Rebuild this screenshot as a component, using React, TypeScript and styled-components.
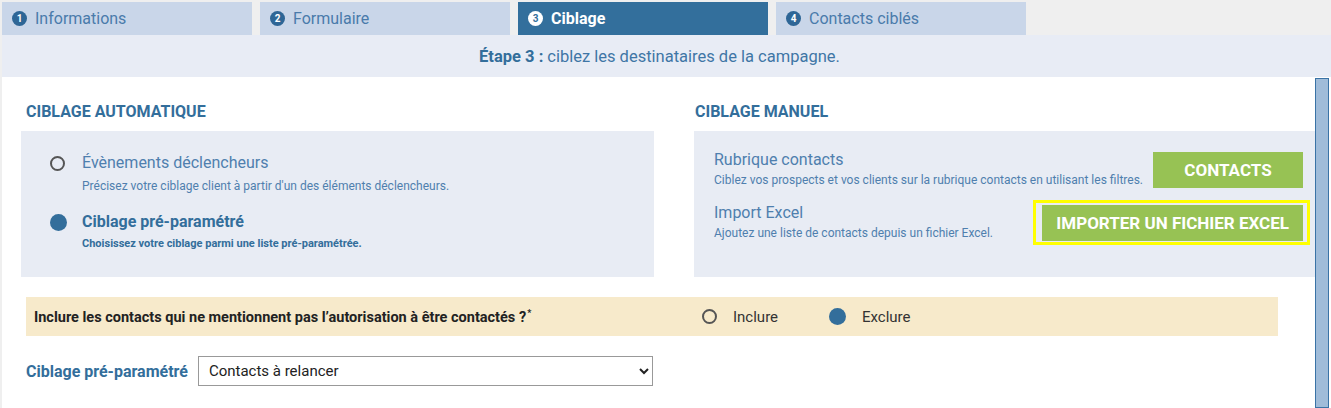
import React from 'react';
import styled, { createGlobalStyle } from 'styled-components';

const GlobalStyle = createGlobalStyle`
  html, body {
    margin: 0;
    padding: 0;
    background: #efefef;
    overflow: hidden;
  }
  body {
    font-family: Roboto, 'Liberation Sans', Arial, sans-serif;
  }
`;

const Page = styled.div`
  padding: 2px 0 0 2px;
  height: 100vh;
  box-sizing: border-box;
  display: flex;
  flex-direction: column;
`;

const Tabs = styled.nav`
  display: flex;
  gap: 8px;
`;

const Tab = styled.div<{ $active?: boolean }>`
  width: 250px;
  height: 33px;
  box-sizing: border-box;
  padding-left: 10px;
  display: flex;
  align-items: center;
  gap: 8px;
  font-size: 16px;
  background: ${(p) => (p.$active ? '#336f9c' : '#c9d6e9')};
  color: ${(p) => (p.$active ? '#ffffff' : '#4a7bab')};
  font-weight: ${(p) => (p.$active ? 700 : 400)};
`;

const StepNumber = styled.span<{ $active?: boolean }>`
  width: 15px;
  height: 15px;
  border-radius: 50%;
  display: inline-flex;
  align-items: center;
  justify-content: center;
  font-size: 10px;
  font-weight: 700;
  background: ${(p) => (p.$active ? '#ffffff' : '#2e6696')};
  color: ${(p) => (p.$active ? '#336f9c' : '#ffffff')};
`;

const StepBar = styled.div`
  height: 42px;
  padding-right: 14px;
  background: #e8ecf5;
  display: flex;
  align-items: center;
  justify-content: center;
  font-size: 16.5px;
  color: #3f76a6;

  strong {
    color: #336e9b;
    margin-right: 4px;
  }
`;

const Main = styled.main`
  flex: 1;
  background: #ffffff;
  display: flex;
`;

const Content = styled.div`
  flex: 1;
  padding: 26px 0 0 19px;
`;

const Columns = styled.div`
  display: grid;
  grid-template-columns: 633px 1fr;
  column-gap: 40px;
`;

const Column = styled.section`
  display: flex;
  flex-direction: column;
`;

const Heading = styled.h2<{ $indent?: number }>`
  margin: 0 0 10px ${(p) => p.$indent ?? 0}px;
  font-size: 16px;
  line-height: 18px;
  font-weight: 700;
  text-transform: uppercase;
  color: #336e9b;
`;

const Panel = styled.div`
  flex: 1;
  background: #e8ecf4;
`;

const AutoPanel = styled(Panel)`
  padding: 22px 0 25px 29px;
`;

const ManualPanel = styled(Panel)`
  padding: 19px 12px 0 20px;
  display: flex;
  flex-direction: column;
  gap: 15px;
`;

const Option = styled.div`
  display: flex;
  gap: 14px;
  & + & {
    margin-top: 18px;
  }
`;

const RadioSlot = styled.div`
  width: 18px;
  height: 20px;
  display: flex;
  align-items: center;
  justify-content: flex-start;
`;

const Radio = styled.span<{ $checked?: boolean }>`
  display: inline-block;
  flex-shrink: 0;
  box-sizing: border-box;
  border-radius: 50%;
  width: ${(p) => (p.$checked ? 17 : 15)}px;
  height: ${(p) => (p.$checked ? 17 : 15)}px;
  border: ${(p) => (p.$checked ? 'none' : '2px solid #555555')};
  background: ${(p) => (p.$checked ? '#336e9b' : 'transparent')};
`;

const OptionTitle = styled.div<{ $strong?: boolean }>`
  font-size: 16px;
  line-height: 20px;
  font-weight: ${(p) => (p.$strong ? 700 : 400)};
  color: ${(p) => (p.$strong ? '#336e9b' : '#4f7fae')};
`;

const OptionHint = styled.div<{ $strong?: boolean }>`
  font-size: ${(p) => (p.$strong ? 11 : 12)}px;
  line-height: 16px;
  margin-top: ${(p) => (p.$strong ? 4 : 5)}px;
  font-weight: ${(p) => (p.$strong ? 700 : 400)};
  color: ${(p) => (p.$strong ? '#336e9b' : '#4f7fae')};
`;

const ManualRow = styled.div`
  display: flex;
  justify-content: space-between;
  align-items: flex-end;
`;

const ManualTitle = styled.div`
  font-size: 16px;
  line-height: 20px;
  color: #4f7fae;
`;

const ManualHint = styled.div`
  font-size: 12px;
  line-height: 16px;
  margin-top: 2px;
  color: #4f7fae;
`;

const GreenButton = styled.button<{ $width?: number }>`
  height: 36px;
  ${(p) => (p.$width ? `width: ${p.$width}px;` : 'padding: 0 14px;')}
  border: none;
  background: #97c254;
  color: #ffffff;
  font-family: Roboto, 'Liberation Sans', Arial, sans-serif;
  font-size: 17px;
  font-weight: 700;
  text-transform: uppercase;
  cursor: pointer;
`;

const FocusRing = styled.div`
  border: 3px solid #ffff00;
  padding: 2px 4px 1px 6px;
  margin: -5px -7px -4px -9px;
  display: flex;
`;

const ConsentRow = styled.div`
  margin: 20px 37px 0 5px;
  height: 39px;
  background: #f7eacb;
  display: flex;
  align-items: center;
`;

const ConsentLabel = styled.div`
  width: 676px;
  box-sizing: border-box;
  padding-left: 8px;
  font-size: 14.5px;
  font-weight: 700;
  color: #222222;

  sup {
    font-size: 9px;
    margin-left: 1px;
  }
`;

const ChoiceGroup = styled.div`
  display: flex;
  align-items: center;
  gap: 51px;
`;

const Choice = styled.label`
  display: flex;
  align-items: center;
  gap: 16px;
  font-size: 15px;
  color: #333333;
`;

const SelectRow = styled.div`
  margin: 20px 0 0 5px;
  display: flex;
  align-items: center;
  gap: 10px;
`;

const SelectLabel = styled.label`
  font-size: 16px;
  font-weight: 700;
  color: #336e9b;
`;

const Select = styled.select`
  width: 455px;
  height: 30px;
  padding: 0 6px;
  border: 1px solid #999999;
  border-radius: 0;
  background: #ffffff;
  font-family: Roboto, 'Liberation Sans', Arial, sans-serif;
  font-size: 15px;
  color: #222222;
`;

const ScrollTrack = styled.div`
  width: 16px;
  padding-top: 1px;
`;

const ScrollThumb = styled.div`
  width: 14px;
  height: 100%;
  box-sizing: border-box;
  background: #a0bcd9;
  border: 1px solid #3a73a6;
`;

const steps = ['Informations', 'Formulaire', 'Ciblage', 'Contacts ciblés'];

const App: React.FC = () => {
  return (
    <>
      <GlobalStyle />
      <Page>
        <Tabs>
          {steps.map((label, i) => (
            <Tab key={label} $active={i === 2}>
              <StepNumber $active={i === 2}>{i + 1}</StepNumber>
              {label}
            </Tab>
          ))}
        </Tabs>
        <StepBar>
          <strong>Étape 3 :</strong> ciblez les destinataires de la campagne.
        </StepBar>
        <Main>
          <Content>
            <Columns>
              <Column>
                <Heading $indent={5}>Ciblage automatique</Heading>
                <AutoPanel>
                  <Option>
                    <RadioSlot>
                      <Radio />
                    </RadioSlot>
                    <div>
                      <OptionTitle>Évènements déclencheurs</OptionTitle>
                      <OptionHint>Précisez votre ciblage client à partir d'un des éléments déclencheurs.</OptionHint>
                    </div>
                  </Option>
                  <Option>
                    <RadioSlot>
                      <Radio $checked />
                    </RadioSlot>
                    <div>
                      <OptionTitle $strong>Ciblage pré-paramétré</OptionTitle>
                      <OptionHint $strong>Choisissez votre ciblage parmi une liste pré-paramétrée.</OptionHint>
                    </div>
                  </Option>
                </AutoPanel>
              </Column>
              <Column>
                <Heading $indent={1}>Ciblage manuel</Heading>
                <ManualPanel>
                  <ManualRow>
                    <div>
                      <ManualTitle>Rubrique contacts</ManualTitle>
                      <ManualHint>Ciblez vos prospects et vos clients sur la rubrique contacts en utilisant les filtres.</ManualHint>
                    </div>
                    <GreenButton $width={150}>Contacts</GreenButton>
                  </ManualRow>
                  <ManualRow>
                    <div>
                      <ManualTitle>Import Excel</ManualTitle>
                      <ManualHint>Ajoutez une liste de contacts depuis un fichier Excel.</ManualHint>
                    </div>
                    <FocusRing>
                      <GreenButton>Importer un fichier Excel</GreenButton>
                    </FocusRing>
                  </ManualRow>
                </ManualPanel>
              </Column>
            </Columns>

            <ConsentRow>
              <ConsentLabel>
                Inclure les contacts qui ne mentionnent pas l’autorisation à être contactés ?<sup>*</sup>
              </ConsentLabel>
              <ChoiceGroup>
                <Choice>
                  <Radio />
                  Inclure
                </Choice>
                <Choice>
                  <Radio $checked />
                  Exclure
                </Choice>
              </ChoiceGroup>
            </ConsentRow>

            <SelectRow>
              <SelectLabel htmlFor="preset">Ciblage pré-paramétré</SelectLabel>
              <Select id="preset" defaultValue="relancer">
                <option value="relancer">Contacts à relancer</option>
              </Select>
            </SelectRow>
          </Content>
          <ScrollTrack>
            <ScrollThumb />
          </ScrollTrack>
        </Main>
      </Page>
    </>
  );
};

export default App;
